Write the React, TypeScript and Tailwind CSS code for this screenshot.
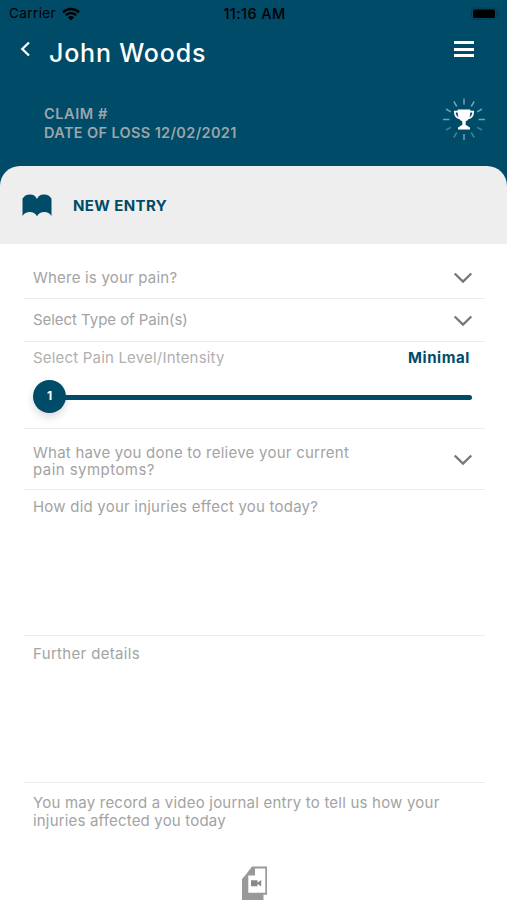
import { useState } from 'react';

const ChevronIcon = () => (
  <svg width="20" height="12" viewBox="0 0 20 12" fill="none" className="mt-px shrink-0">
    <path d="M1.700 1.500 10 9.600l8.300-8.100" stroke="#777" strokeWidth="2.300" />
  </svg>
);

const WifiIcon = () => (
  <svg width="18" height="14" viewBox="0 0 18 14" fill="none">
    <path d="M1 5.300a11.500 11.500 0 0 1 16 0" stroke="#000" strokeWidth="2.400" />
    <path d="M3.800 8.200a7.500 7.500 0 0 1 10.400 0" stroke="#000" strokeWidth="2.200" />
    <path d="M9 13.600 5.900 10.400a4.400 4.400 0 0 1 6.200 0z" fill="#000" />
  </svg>
);

const BatteryIcon = () => (
  <svg width="30" height="14" viewBox="0 0 30 14" fill="none">
    <rect x="1.500" y="1" width="25" height="11.500" rx="3.500" stroke="#003c53" />
    <rect x="3" y="2.600" width="22" height="8.400" rx="1.800" fill="#000" />
    <path d="M28 4.800v4c1-.3 1.500-1 1.500-2s-.5-1.700-1.500-2z" fill="#003c53" />
  </svg>
);

const TrophyIcon = () => (
  <svg width="44" height="44" viewBox="0 0 44 44" fill="none">
    <g stroke="#6fa3b5" strokeWidth="1.500">
      <path d="M22 .5v6M22 36v6M1 21.500h6.500M36.500 21.500H43" />
      <path d="m11.800 3.500 3 5M32.200 3.500l-3 5M4 11l4.800 2.800M40 11l-4.800 2.800" />
      <path d="m4 32 4.800-2.700M40 32l-4.800-2.700M11.800 39.500l3-5M32.200 39.500l-3-5" opacity=".6" />
    </g>
    <path
      d="M16 13.700h-3.200c0 4 1.700 6.600 6 6.800M28 13.700h3.200c0 4-1.700 6.600-6 6.800"
      stroke="#fff"
      strokeWidth="1.700"
    />
    <path d="M15.700 11.500h12.600c.3 6.500-1 10.500-4.600 11.800v4c2 .3 2.800.9 3 2h1.300v2.200H16v-2.200h1.300c.2-1.100 1-1.700 3-2v-4c-3.600-1.300-4.900-5.300-4.600-11.800z" fill="#fff" />
  </svg>
);

const BookIcon = () => (
  <svg width="30" height="23" viewBox="0 0 30 23">
    <path
      d="M15 5C13 1 10.300.5 7.800.5 4.500.5 2 2 .5 4.800V22c1.700-2.800 4-4 7.200-4 3.300 0 5.600 1.200 7.300 4.300 1.700-3.100 4-4.300 7.300-4.300 3.200 0 5.500 1.200 7.200 4V4.800C28 2 25.500.5 22.200.5 19.700.5 17 1 15 5z"
      fill="#004b68"
    />
  </svg>
);

const VideoFileIcon = () => (
  <svg width="27" height="36" viewBox="0 0 27 36">
    <path d="M1 13 4.500 9 11 .5h15v28.300h-3.500V36H1z" fill="#999" />
    <path d="M14 2.500h10.300v24.300H7.300V9.500H14z" fill="#fff" />
    <path d="M10 14.300h6.500v5.900H10zM16 17l4.200-3v6.500L16 17.600z" fill="#888" />
  </svg>
);

export default function App() {
  const [level] = useState(1);

  return (
    <div className="h-[900px] w-[507px] overflow-hidden bg-white font-['Inter',sans-serif] text-[15px] leading-[17.500px] text-[#a3a3a3]">
      <header className="h-[194px] bg-[#004b68]">
        <div className="grid h-7 grid-cols-3 items-center pl-[9px] pr-[7px] text-[13.500px] text-black">
          <div className="flex items-center gap-1.5">
            <span className="tracking-[0.400px]">Carrier</span>
            <WifiIcon />
          </div>
          <span className="text-center text-[14.500px] font-medium tracking-[0.400px]">11:16 AM</span>
          <div className="flex justify-end">
            <BatteryIcon />
          </div>
        </div>
        <div className="flex h-[50px] items-center pl-5 pr-[33px]">
          <svg width="11" height="16" viewBox="0 0 11 16" fill="none" className="-mt-2">
            <path d="M9 1.500 2.300 8 9 14.500" stroke="#fff" strokeWidth="2.300" />
          </svg>
          <h1 className="ml-[18px] text-[25px] font-medium leading-[30px] tracking-[0.800px] text-white">
            John Woods
          </h1>
          <div className="-mt-2 ml-auto flex w-5 flex-col gap-[3.500px]">
            <div className="h-[3px] bg-white" />
            <div className="h-[3px] bg-white" />
            <div className="h-[3px] bg-white" />
          </div>
        </div>
        <div className="flex items-start justify-between pl-11 pr-[21px] pt-5">
          <div className="pt-[7px] text-[14.500px] font-semibold leading-[18.500px] text-[#9aa6aa]">
            <p className="tracking-[0.600px]">CLAIM #</p>
            <p className="tracking-[0.360px]">DATE OF LOSS 12/02/2021</p>
          </div>
          <TrophyIcon />
        </div>
      </header>

      <main className="-mt-7">
        <div className="bg-[#004b68]">
          <div className="flex h-[78px] items-center rounded-t-[20px] bg-[#eeeeee] pl-[22px]">
            <BookIcon />
            <h2 className="ml-[21px] mt-px text-[15px] font-bold tracking-[0.400px] text-[#004b68]">NEW ENTRY</h2>
          </div>
        </div>

        <div className="mx-6 w-[461px]">
          <div className="flex h-[55px] items-center justify-between border-b border-[#ececec] pl-[9px] pr-3 pt-[13px]">
            <span className="tracking-[0.210px]">Where is your pain?</span>
            <ChevronIcon />
          </div>
          <div className="flex h-[43px] items-center justify-between border-b border-[#ececec] pl-[9px] pr-3">
            <span className="tracking-[-0.050px]">Select Type of Pain(s)</span>
            <ChevronIcon />
          </div>
          <div className="h-[87px] border-b border-[#ececec] pl-[9px] pr-[15px] pt-[7px]">
            <div className="flex justify-between">
              <span className="tracking-[0.190px] text-[#b0b0b0]">Select Pain Level/Intensity</span>
              <span className="font-bold tracking-[0.600px] text-[#004b68]">Minimal</span>
            </div>
            <div className="-mr-0.5 mt-[13px] flex items-center">
              <div className="flex size-[33px] items-center justify-center rounded-full bg-[#004b68] text-[12px] font-bold text-white shadow-[0_4px_8px_rgba(0,0,0,0.150)]">
                {level}
              </div>
              <div className="-ml-1 mt-[3px] h-[5px] flex-1 rounded-full bg-[#004b68]" />
            </div>
          </div>
          <div className="flex h-[61px] items-center justify-between border-b border-[#ececec] pl-[9px] pr-3">
            <p className="pt-1">
              <span className="tracking-[0.250px]">What have you done to relieve your current</span>
              <br />
              <span className="tracking-[0.450px]">pain symptoms?</span>
            </p>
            <ChevronIcon />
          </div>
          <div className="h-[146px] border-b border-[#ececec] pl-[9px] pt-2">
            <span className="tracking-[0.220px]">How did your injuries effect you today?</span>
          </div>
          <div className="h-[147px] border-b border-[#ececec] pl-[9px] pt-[9px]">
            <span className="tracking-[0.330px]">Further details</span>
          </div>
          <p className="pl-[9px] pt-[11px]">
            <span className="tracking-[0.210px]">You may record a video journal entry to tell us how your</span>
            <br />
            <span className="tracking-[0.180px]">injuries affected you today</span>
          </p>
          <div className="mt-[37px] pl-[217px]">
            <VideoFileIcon />
          </div>
        </div>
      </main>
    </div>
  );
}
